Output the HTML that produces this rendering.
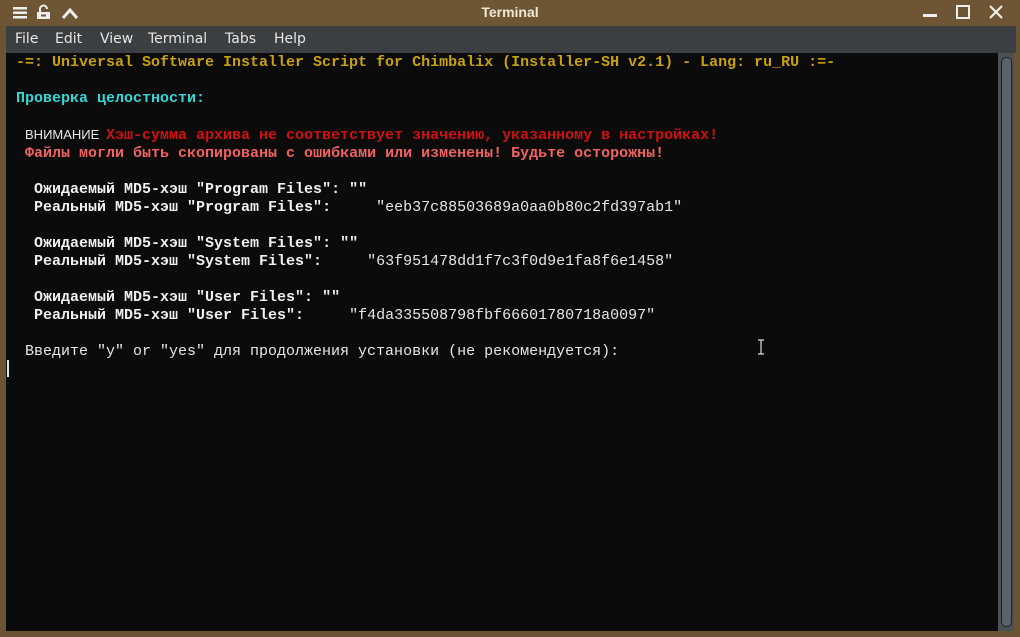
<!DOCTYPE html>
<html><head><meta charset="utf-8"><style>
html,body{margin:0;padding:0;width:1020px;height:637px;overflow:hidden;background:#6b5433;}
#title{position:absolute;left:0;top:0;width:1020px;height:26px;background:#6e5634;}
#title .t{position:absolute;left:0;width:1020px;top:4px;text-align:center;font:bold 14px "Liberation Sans",sans-serif;color:#f0ead8;}
#menu{position:absolute;left:6px;top:26px;width:1010px;height:27px;background:#3b3f42;font:14px "DejaVu Sans","Liberation Sans",sans-serif;color:#e6e6e6;}
#menu span{position:absolute;top:5px;}
#term{position:absolute;left:6px;top:53px;width:992px;height:578px;background:#0b0b0b;}
#sb{position:absolute;left:998px;top:53px;width:16px;height:578px;background:#4a5054;}
#sb div{position:absolute;left:3px;top:4px;width:9px;height:568px;border:1px solid #222;border-radius:5px;background:#59636a;}
pre{position:absolute;left:16px;top:54px;margin:0;font:15px/18px "Liberation Mono",monospace;color:#e6e6e6;}
.y{color:#c8a20c;font-weight:bold}.c{color:#34d6d6;font-weight:bold}
.r{color:#d01010;font-weight:bold}.lr{color:#f06262;font-weight:bold}
.w{color:#f0f0f0;font-weight:bold}
.sans{font-family:"Liberation Sans",sans-serif;font-size:13px;display:inline-block;width:81px;white-space:nowrap;overflow:visible;}
</style></head><body>
<div id="title">
<svg width="90" height="26" style="position:absolute;left:0;top:0">
<rect x="13" y="7" width="14" height="2.5" fill="#eee"/><rect x="13" y="11.5" width="14" height="2.5" fill="#eee"/><rect x="13" y="16" width="14" height="2.5" fill="#eee"/>
<path d="M40 12 v-3 a3.5 3.5 0 0 1 7 0" stroke="#eee" stroke-width="2" fill="none"/><rect x="37" y="12" width="13" height="7" fill="#eee"/><rect x="41" y="14.5" width="5" height="2" fill="#6e5634"/>
<path d="M63 18 L70 10 L77 18" stroke="#eee" stroke-width="3" fill="none"/>
</svg>
<div class="t">Terminal</div>
<svg width="110" height="26" style="position:absolute;left:910px;top:0">
<rect x="13" y="14" width="14" height="3" fill="#eee"/>
<rect x="47" y="6" width="12" height="12" stroke="#eee" stroke-width="2" fill="none"/>
<path d="M80 6 L92 18 M92 6 L80 18" stroke="#eee" stroke-width="2.2"/>
</svg>
</div>
<div id="menu"><span style="left:9px">File</span><span style="left:49px">Edit</span><span style="left:94px">View</span><span style="left:142px">Terminal</span><span style="left:219px">Tabs</span><span style="left:268px">Help</span></div>
<div id="term"></div>
<div id="sb"><div></div></div>
<pre><span class="y">-=: Universal Software Installer Script for Chimbalix (Installer-SH v2.1) - Lang: ru_RU :=-</span>

<span class="c">Проверка целостности:</span>

 <span class="sans">ВНИМАНИЕ</span><span class="r">Хэш-сумма архива не соответствует значению, указанному в настройках!</span>
 <span class="lr">Файлы могли быть скопированы с ошибками или изменены! Будьте осторожны!</span>

  <span class="w">Ожидаемый MD5-хэш "Program Files": ""</span>
  <span class="w">Реальный MD5-хэш "Program Files":</span>     "eeb37c88503689a0aa0b80c2fd397ab1"

  <span class="w">Ожидаемый MD5-хэш "System Files": ""</span>
  <span class="w">Реальный MD5-хэш "System Files":</span>     "63f951478dd1f7c3f0d9e1fa8f6e1458"

  <span class="w">Ожидаемый MD5-хэш "User Files": ""</span>
  <span class="w">Реальный MD5-хэш "User Files":</span>     "f4da335508798fbf66601780718a0097"

 Введите "y" or "yes" для продолжения установки (не рекомендуется):
</pre>
<div style="position:absolute;left:7px;top:360px;width:2px;height:17px;background:#e6e6e6"></div>
<svg width="10" height="16" style="position:absolute;left:756px;top:339px"><path d="M2 1h6M5 1v14M2 15h6" stroke="#ddd" stroke-width="1.2" fill="none"/></svg>
</body></html>
